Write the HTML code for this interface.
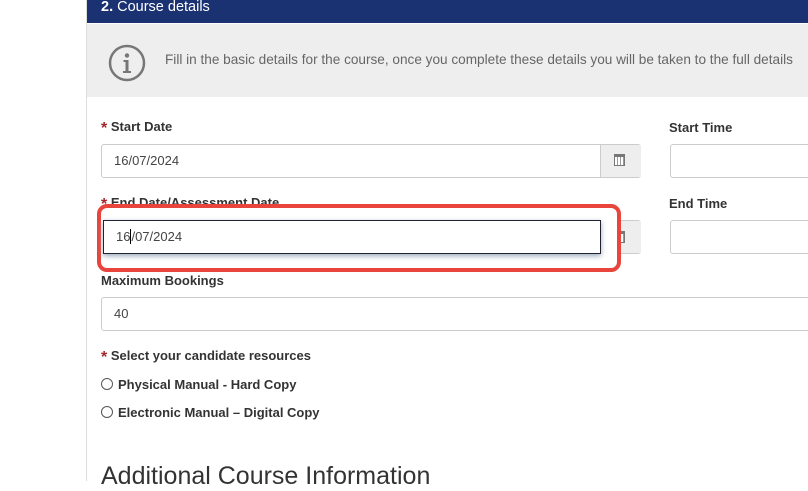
<!DOCTYPE html>
<html><head><style>
body{margin:0;width:808px;height:481px;overflow:hidden;background:#fff;font-family:"Liberation Sans",sans-serif;position:relative}
.a{position:absolute}
.lbl{font-size:13px;font-weight:bold;color:#333;white-space:nowrap}
.inp{border:1px solid #ccc;border-radius:3px;background:#fff;font-size:13px;color:#444;box-sizing:border-box;padding-left:12px;line-height:31px}
.star{color:#a3262c;font-size:16px;font-weight:bold;vertical-align:-2px}
.cal{position:absolute;width:11px;height:12px;border:1px solid #777;border-top-width:3px;box-sizing:border-box;background:repeating-linear-gradient(90deg,#fff 0 2px,#999 2px 3px)}
</style></head><body>
<div class="a" style="left:86px;top:0;width:1px;height:481px;background:#ddd"></div>
<div class="a" style="left:87px;top:0;width:721px;height:23px;background:#1b3272;color:#fff;font-size:14.5px;line-height:14px;padding-left:14px;box-sizing:border-box"><b>2.</b> Course details</div>
<div class="a" style="left:87px;top:24px;width:721px;height:73px;background:#eee"></div>
<svg class="a" style="left:107px;top:44px" width="40" height="38" viewBox="0 0 40 38"><circle cx="20" cy="19" r="17" fill="none" stroke="#777" stroke-width="2.5"/><circle cx="20" cy="11.5" r="2.2" fill="#777"/><path d="M16.5 16h5v11h2.5v2h-8v-2h2.5v-9h-2z" fill="#777"/></svg>
<div class="a" style="left:165px;top:52px;font-size:13.6px;color:#666;white-space:nowrap">Fill in the basic details for the course, once you complete these details you will be taken to the full details</div>
<div class="a lbl" style="left:101px;top:119px"><span class="star">*</span> Start Date</div>
<div class="a inp" style="left:101px;top:144px;width:540px;height:34px">16/07/2024</div>
<div class="a" style="left:600px;top:145px;width:40px;height:32px;background:#eee;border-left:1px solid #ccc"></div>
<div class="cal" style="left:614px;top:154px"></div>
<div class="a lbl" style="left:669px;top:120px">Start Time</div>
<div class="a inp" style="left:670px;top:144px;width:150px;height:34px"></div>
<div class="a lbl" style="left:101px;top:195px"><span class="star">*</span> End Date/Assessment Date</div>
<div class="a inp" style="left:101px;top:220px;width:540px;height:34px"></div>
<div class="a" style="left:600px;top:221px;width:40px;height:32px;background:#eee;border-left:1px solid #ccc"></div>
<div class="cal" style="left:614px;top:231px"></div>
<div class="a lbl" style="left:669px;top:196px">End Time</div>
<div class="a inp" style="left:670px;top:220px;width:150px;height:34px"></div>
<div class="a" style="left:97px;top:204px;width:524px;height:68px;border:4px solid #e8453c;border-radius:10px;box-sizing:border-box;background:#fff"></div>
<div class="a inp" style="left:103px;top:220px;width:498px;height:34px;border:1px solid #223;border-radius:0;box-shadow:0 2px 5px #9ab">16<span style="border-left:1px solid #000"></span>/07/2024</div>
<div class="a lbl" style="left:101px;top:273px">Maximum Bookings</div>
<div class="a inp" style="left:101px;top:297px;width:720px;height:34px">40</div>
<div class="a lbl" style="left:101px;top:348px"><span class="star">*</span> Select your candidate resources</div>
<div class="a lbl" style="left:101px;top:377px"><span style="display:inline-block;width:10px;height:10px;border:1px solid #555;border-radius:50%;vertical-align:-1px;margin-right:5px"></span>Physical Manual - Hard Copy</div>
<div class="a lbl" style="left:101px;top:405px"><span style="display:inline-block;width:10px;height:10px;border:1px solid #555;border-radius:50%;vertical-align:-1px;margin-right:5px"></span>Electronic Manual – Digital Copy</div>
<div class="a" style="left:101px;top:462px;font-size:25px;color:#333;white-space:nowrap">Additional Course Information</div>
</body></html>
